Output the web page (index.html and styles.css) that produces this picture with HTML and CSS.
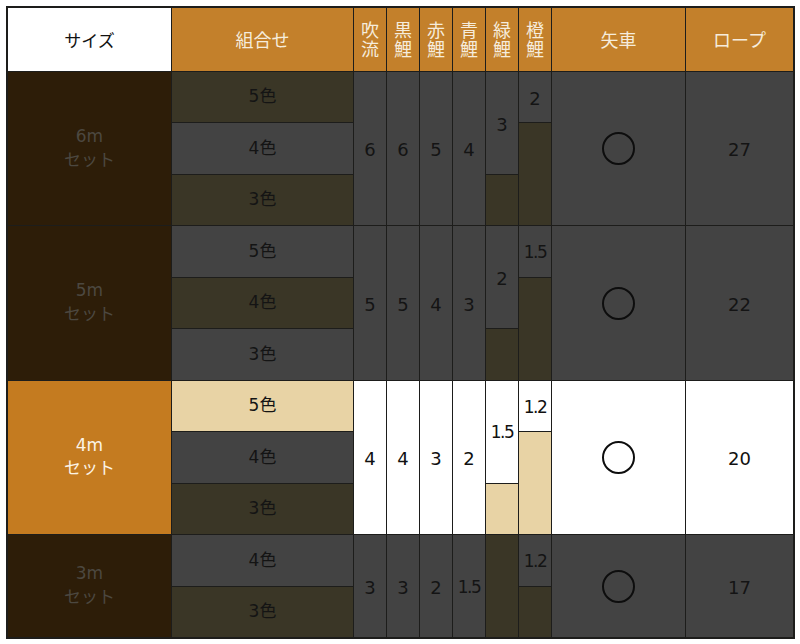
FILE: index.html
```html
<!DOCTYPE html>
<html lang="ja">
<head>
<meta charset="utf-8">
<title>セット表</title>
<link rel="stylesheet" href="styles.css">
</head>
<body>
<div class="table">
  <!-- header -->
  <div class="c hd-white">サイズ</div>
  <div class="c hd">組合せ</div>
  <div class="c hd"><span class="vt">吹流</span></div>
  <div class="c hd"><span class="vt">黒鯉</span></div>
  <div class="c hd"><span class="vt">赤鯉</span></div>
  <div class="c hd"><span class="vt">青鯉</span></div>
  <div class="c hd"><span class="vt">緑鯉</span></div>
  <div class="c hd"><span class="vt">橙鯉</span></div>
  <div class="c hd">矢車</div>
  <div class="c hd">ロープ</div>

  <!-- 6m -->
  <div class="c size r3">6m<br>セット</div>
  <div class="c olive">5色</div>
  <div class="c grey num r3">6</div>
  <div class="c grey num r3">6</div>
  <div class="c grey num r3">5</div>
  <div class="c grey num r3">4</div>
  <div class="c grey num r2">3</div>
  <div class="c grey num">2</div>
  <div class="c grey r3"><span class="ring"></span></div>
  <div class="c grey num r3">27</div>
  <div class="c grey">4色</div>
  <div class="c olive r2"></div>
  <div class="c olive">3色</div>
  <div class="c olive"></div>

  <!-- 5m -->
  <div class="c size r3">5m<br>セット</div>
  <div class="c grey">5色</div>
  <div class="c grey num r3">5</div>
  <div class="c grey num r3">5</div>
  <div class="c grey num r3">4</div>
  <div class="c grey num r3">3</div>
  <div class="c grey num r2">2</div>
  <div class="c grey dec">1.5</div>
  <div class="c grey r3"><span class="ring"></span></div>
  <div class="c grey num r3">22</div>
  <div class="c olive">4色</div>
  <div class="c olive r2"></div>
  <div class="c grey">3色</div>
  <div class="c olive"></div>

  <!-- 4m -->
  <div class="c size-on r3">4m<br>セット</div>
  <div class="c tan">5色</div>
  <div class="c white num r3">4</div>
  <div class="c white num r3">4</div>
  <div class="c white num r3">3</div>
  <div class="c white num r3">2</div>
  <div class="c white r2 dec">1.5</div>
  <div class="c white dec">1.2</div>
  <div class="c white r3"><span class="ring"></span></div>
  <div class="c white num r3">20</div>
  <div class="c grey">4色</div>
  <div class="c tan r2"></div>
  <div class="c olive">3色</div>
  <div class="c tan"></div>

  <!-- 3m -->
  <div class="c size r2">3m<br>セット</div>
  <div class="c grey">4色</div>
  <div class="c grey num r2">3</div>
  <div class="c grey num r2">3</div>
  <div class="c grey num r2">2</div>
  <div class="c grey r2 dec">1.5</div>
  <div class="c olive r2"></div>
  <div class="c grey dec">1.2</div>
  <div class="c grey r2"><span class="ring"></span></div>
  <div class="c grey num r2">17</div>
  <div class="c olive">3色</div>
  <div class="c olive"></div>
</div>
</body>
</html>
```

FILE: styles.css
```css
html, body {
  margin: 0;
  padding: 0;
  background: #ffffff;
}

body {
  padding: 6px 0 0 6px;
  font-family: "DejaVu Sans", "Noto Sans CJK JP", sans-serif;
}

.table {
  box-sizing: border-box;
  width: 789px;
  height: 633px;
  padding: 2px;
  background: #1d1d1b;
  display: grid;
  grid-template-columns: 163px 181px repeat(6, 32px) 133px 107px;
  grid-template-rows: 63px repeat(11, 1fr);
  gap: 1px;
}

.c {
  display: flex;
  align-items: center;
  justify-content: center;
  text-align: center;
  font-size: 17px;
  line-height: 1.15;
  color: #141414;
}

.r2 { grid-row: span 2; }
.r3 { grid-row: span 3; }

.num {
  font-size: 18px;
  padding-top: 4px;
}

.dec {
  letter-spacing: -1.5px;
  font-size: 17px;
  padding-top: 3px;
}

.hd {
  background: #c3802b;
  color: #f6ecdc;
  font-family: "Noto Sans CJK JP", sans-serif;
  font-size: 18px;
}

.vt {
  writing-mode: vertical-rl;
  text-orientation: upright;
  letter-spacing: 1px;
  line-height: 1;
  font-size: 18px;
}

.hd-white {
  background: #ffffff;
  color: #111111;
  font-family: "Noto Sans CJK JP", sans-serif;
  font-size: 17px;
}

.size {
  background: #2d1d08;
  color: #4c4840;
  line-height: 1.4;
}

.size-on {
  background: #c47b20;
  color: #fbf3e6;
  line-height: 1.4;
}

.grey {
  background: #434343;
}

.olive {
  background: #3a3626;
}

.tan {
  background: #e8d3a5;
}

.white {
  background: #ffffff;
  color: #111111;
}

.ring {
  display: block;
  box-sizing: border-box;
  width: 33px;
  height: 33px;
  border: 2.5px solid #0d0d0d;
  border-radius: 50%;
}
```
